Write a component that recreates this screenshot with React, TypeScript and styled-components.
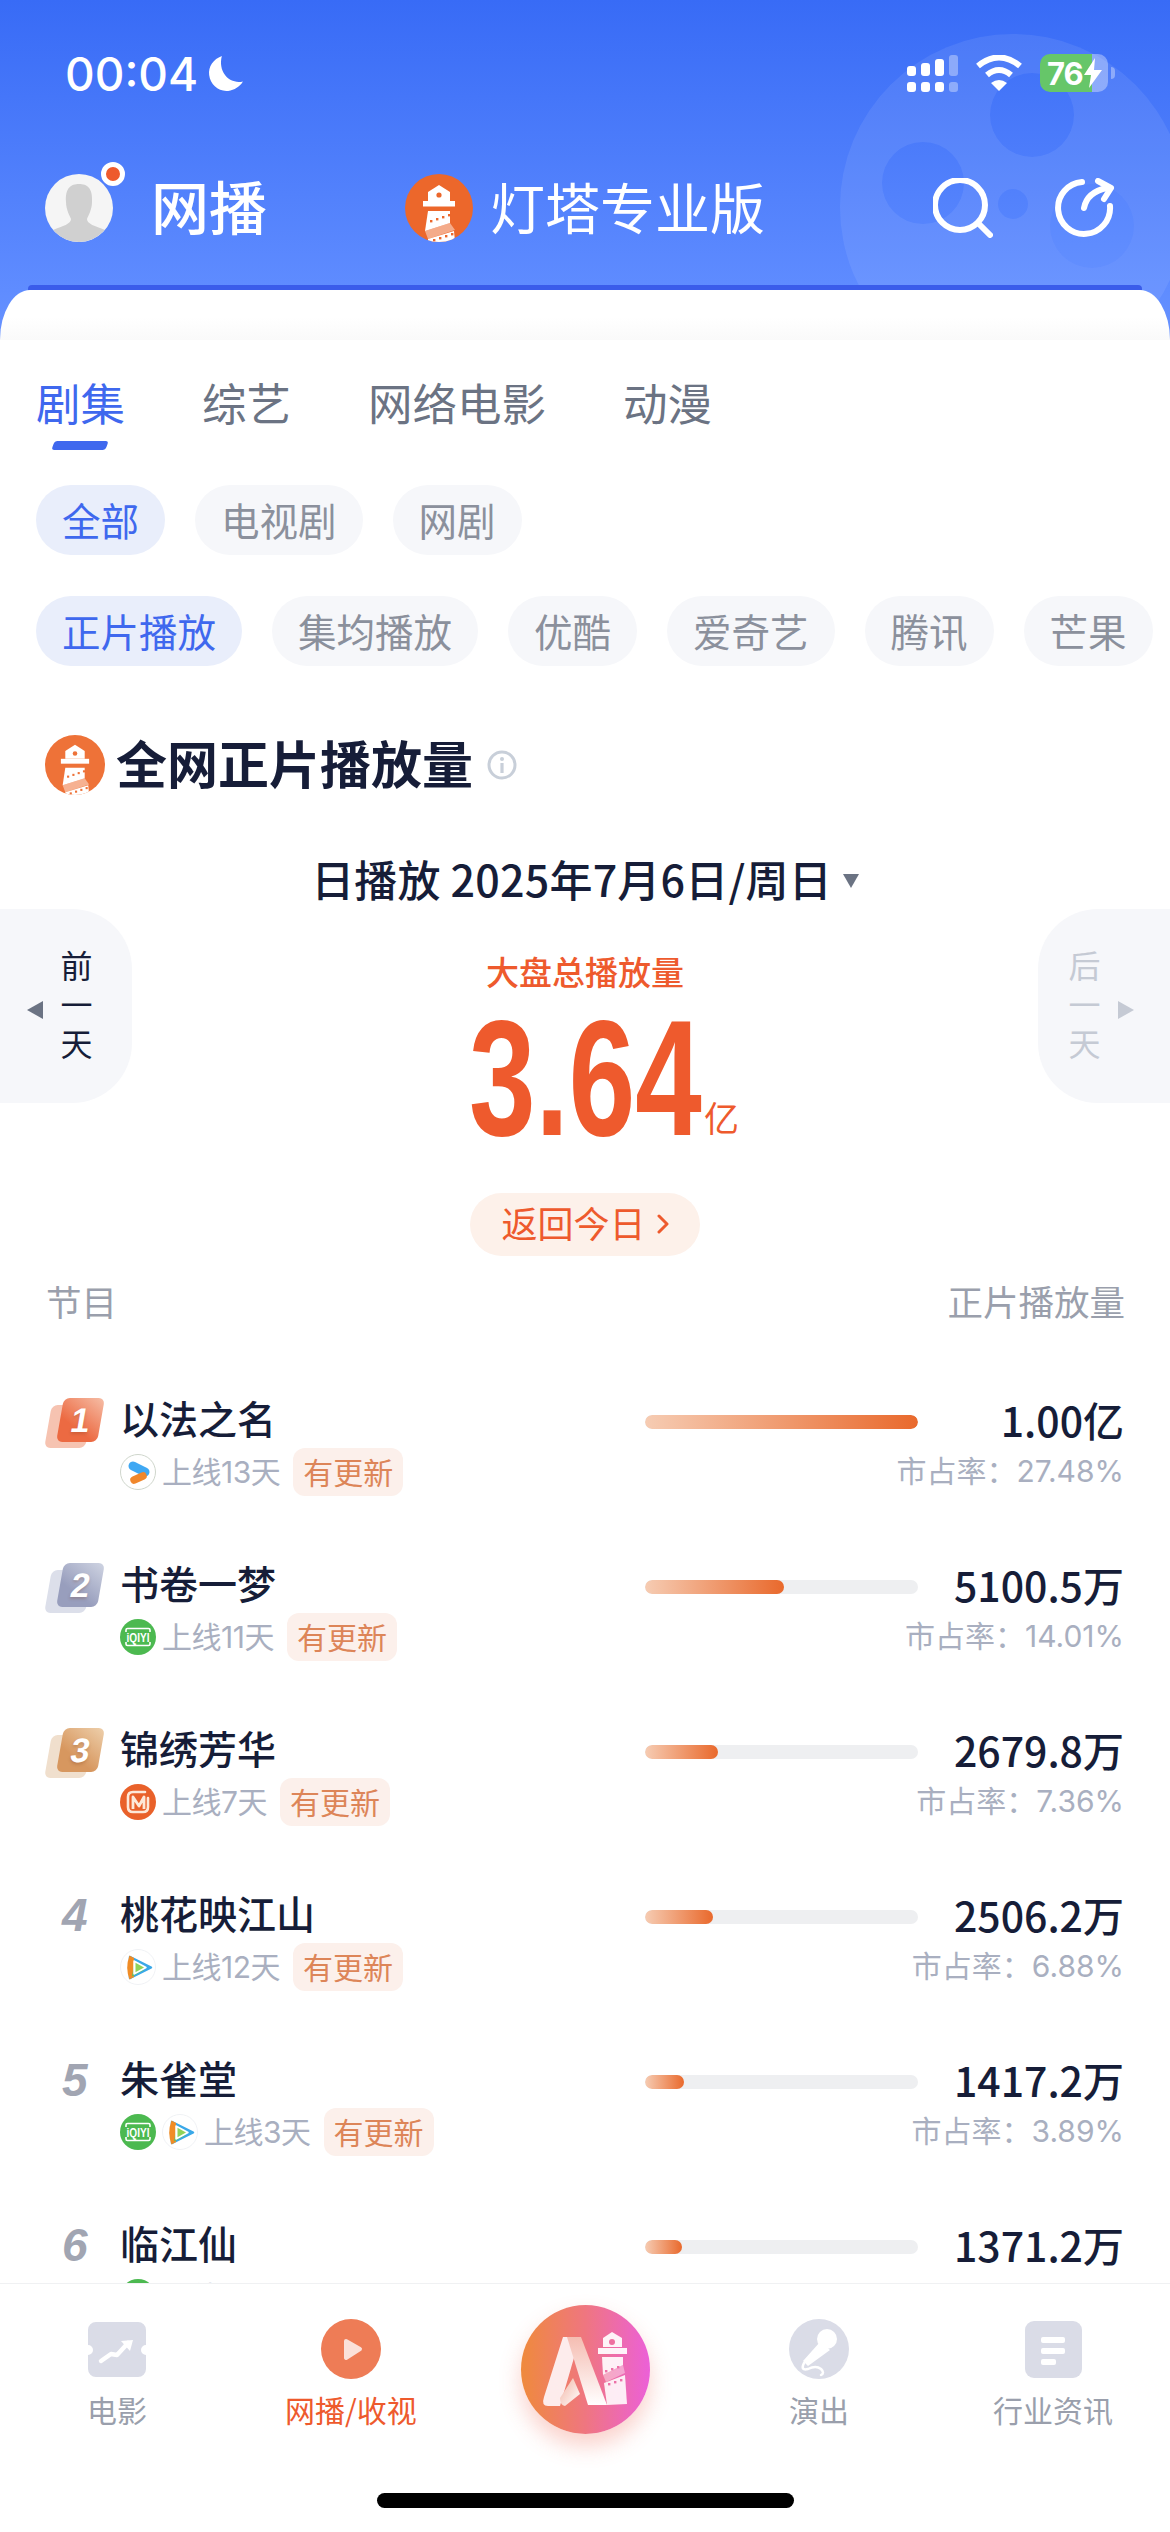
import styled, { createGlobalStyle } from "styled-components";

interface RowData {
  rank: number;
  name: string;
  platforms: string[];
  days: string;
  updated: boolean;
  bar: number;
  value: string;
  share: string;
}

const rows: RowData[] = [
  { rank: 1, name: "以法之名", platforms: ["youku"], days: "上线13天", updated: true, bar: 273, value: "1.00亿", share: "市占率：27.48%" },
  { rank: 2, name: "书卷一梦", platforms: ["iqiyi"], days: "上线11天", updated: true, bar: 139, value: "5100.5万", share: "市占率：14.01%" },
  { rank: 3, name: "锦绣芳华", platforms: ["mango"], days: "上线7天", updated: true, bar: 73, value: "2679.8万", share: "市占率：7.36%" },
  { rank: 4, name: "桃花映江山", platforms: ["tencent"], days: "上线12天", updated: true, bar: 68, value: "2506.2万", share: "市占率：6.88%" },
  { rank: 5, name: "朱雀堂", platforms: ["iqiyi", "tencent"], days: "上线3天", updated: true, bar: 39, value: "1417.2万", share: "市占率：3.89%" },
  { rank: 6, name: "临江仙", platforms: ["iqiyi"], days: "上线", updated: false, bar: 37, value: "1371.2万", share: "" },
];

const tabs = ["剧集", "综艺", "网络电影", "动漫"];
const kinds = ["全部", "电视剧", "网剧"];
const metrics = ["正片播放", "集均播放", "优酷", "爱奇艺", "腾讯", "芒果"];

const badgeColors: Record<number, { front: string; back: string }> = {
  1: { front: "linear-gradient(35deg, #ec6a42 35%, #f6bfa8)", back: "#f6c3b1" },
  2: { front: "linear-gradient(35deg, #989ebd 35%, #d0d5e3)", back: "#dcdfea" },
  3: { front: "linear-gradient(35deg, #d7975f 35%, #eed0ac)", back: "#f0dfcd" },
};

const LighthouseLogo = ({ size, color }: { size: number; color: string }) => (
  <LogoDisc $size={size} $color={color}>
    <svg viewBox="0 0 68 68" width={size} height={size}>
      <path d="M34 11 L45 18 V27 H23 V18 Z" fill="#fff" />
      <circle cx="34" cy="21" r="2.6" fill={color} />
      <rect x="18" y="27" width="32" height="5.5" fill="#fff" />
      <path d="M23 37 H45 V49 L20 57 Z" fill="#fff" />
      <path d="M20 57 L45 49 L50 56 L23 65 Z" fill="#fff" opacity="0.45" />
      <path d="M23 65 L49 57 L50 68 H23 Z" fill="#fff" />
      <g fill={color}>
        <rect x="25" y="46" width="2.4" height="2.4" />
        <rect x="31" y="44" width="2.4" height="2.4" />
        <rect x="37" y="42" width="2.4" height="2.4" />
        <rect x="43" y="40" width="2.4" height="2.4" />
        <rect x="28" y="65" width="2.4" height="2.4" />
        <rect x="34" y="63" width="2.4" height="2.4" />
        <rect x="40" y="61" width="2.4" height="2.4" />
        <rect x="46" y="59" width="2.4" height="2.4" />
      </g>
    </svg>
  </LogoDisc>
);

const PlatformIcon = ({ kind }: { kind: string }) => {
  if (kind === "iqiyi") {
    return (
      <svg viewBox="0 0 36 36" width="36" height="36">
        <circle cx="18" cy="18" r="18" fill="#4cb950" />
        <path d="M6 13 V11 Q6 9.5 7.5 9.5 H28.5 Q30 9.5 30 11 V13 M30 23 V25 Q30 26.5 28.5 26.5 H7.5 Q6 26.5 6 25 V23" fill="none" stroke="#fff" strokeWidth="1.6" />
        <text x="18" y="22.6" textAnchor="middle" fontFamily="Liberation Sans" fontWeight="700" fontSize="12" textLength="23" lengthAdjust="spacingAndGlyphs" fill="#fff">
          iQIYI
        </text>
      </svg>
    );
  }
  if (kind === "mango") {
    return (
      <svg viewBox="0 0 36 36" width="36" height="36">
        <circle cx="18" cy="18" r="18" fill="#e9612a" />
        <path d="M25 8 H13 Q8 8 8 13 V23 Q8 28 13 28 H23 Q28 28 28 23 V14" fill="none" stroke="#fde8d8" strokeWidth="2.6" strokeLinecap="round" />
        <path d="M13 25 V13 L19 22 L24 13 V25" fill="none" stroke="#fde8d8" strokeWidth="2.8" strokeLinejoin="round" />
      </svg>
    );
  }
  if (kind === "tencent") {
    return (
      <svg viewBox="0 0 36 36" width="36" height="36">
        <circle cx="18" cy="18" r="17.5" fill="#fff" stroke="#f0f2f5" />
        <path d="M10 8 L31 18.5 L10 29 Z" fill="#3aa8e8" stroke="#3aa8e8" strokeWidth="2.5" strokeLinejoin="round" />
        <path d="M9.5 6.5 Q5 18.5 9.5 30.5 L14 28 V9 Z" fill="#f08c26" />
        <path d="M12 27.5 L24 21 L14 16 Z" fill="#5cc25e" />
        <path d="M14 12 L26 18.5 L14 25 Z" fill="#fff" stroke="#fff" strokeWidth="1.5" strokeLinejoin="round" />
        <path d="M15.5 13.8 L24 18.5 L15.5 23.2 Z" fill="#8fd35a" />
      </svg>
    );
  }
  return (
    <svg viewBox="0 0 36 36" width="36" height="36">
      <circle cx="18" cy="18" r="17.5" fill="#fff" stroke="#cfd6cc" />
      <path d="M13 12 L25 18" stroke="#3fa8f3" strokeWidth="9" strokeLinecap="round" />
      <path d="M14 26 L23 22" stroke="#f0872c" strokeWidth="7.5" strokeLinecap="round" />
    </svg>
  );
};

const Rank = ({ rank }: { rank: number }) => {
  const colors = badgeColors[rank];
  if (!colors) return <PlainRank>{rank}</PlainRank>;
  return (
    <BadgeStack>
      <BadgeBack style={{ background: colors.back }} />
      <BadgeFront style={{ background: colors.front }}>{rank}</BadgeFront>
    </BadgeStack>
  );
};

const DayLabel = ({ text, muted }: { text: string; muted?: boolean }) => (
  <DayText>
    {text.split("").map((c, i) => (
      <DayChar key={i} $muted={muted}>{c}</DayChar>
    ))}
  </DayText>
);

const App = () => {
  return (
    <Page>
      <GlobalStyle />
      <Header>
        <Reel viewBox="0 0 1170 340" width="1170" height="340">
          <defs>
            <mask id="reel-holes">
              <rect width="1170" height="340" fill="#fff" />
              <circle cx="1032" cy="115" r="42" fill="#000" />
              <circle cx="923" cy="183" r="41" fill="#000" />
              <circle cx="1013" cy="204" r="15" fill="#000" />
              <circle cx="1092" cy="226" r="42" fill="#000" opacity="0.5" />
            </mask>
          </defs>
          <circle cx="1013" cy="207" r="173" fill="#fff" opacity="0.075" mask="url(#reel-holes)" />
        </Reel>
        <StatusBar>
          <Clock>
            00:04
            <svg viewBox="0 0 36 36" width="38" height="38">
              <path d="M15 1 C7 4 2 11 3 19 C4 28 12 35 21 34 C27 33 32 30 35 25 C23 28 11 17 15 1 Z" fill="#fff" />
            </svg>
          </Clock>
          <StatusIcons>
            <svg viewBox="0 0 51 37" width="51" height="37">
              <g fill="#fff">
                <rect x="0" y="11" width="9" height="10" rx="3" />
                <rect x="14" y="8" width="9" height="13" rx="3" />
                <rect x="28" y="4" width="9" height="17" rx="3" />
                <rect x="0" y="27" width="9" height="10" rx="3" />
                <rect x="14" y="27" width="9" height="10" rx="3" />
                <rect x="28" y="27" width="9" height="10" rx="3" />
              </g>
              <g fill="#fff" opacity="0.35">
                <rect x="42" y="0" width="9" height="21" rx="3" />
                <rect x="42" y="27" width="9" height="10" rx="3" />
              </g>
            </svg>
            <svg viewBox="0 0 48 36" width="48" height="36">
              <path d="M3 11 Q24 -6 45 11" fill="none" stroke="#fff" strokeWidth="6" />
              <path d="M12 20 Q24 10 36 20" fill="none" stroke="#fff" strokeWidth="6" />
              <path d="M16 28 Q24 22 32 28 L24 36 Z" fill="#fff" />
            </svg>
            <Battery>
              76
              <svg viewBox="0 0 18 30" width="18" height="30">
                <path d="M11 0 L0 17 H7 L5 30 L18 12 H10 Z" fill="#fff" />
              </svg>
            </Battery>
          </StatusIcons>
        </StatusBar>
        <NavRow>
          <NavLeft>
            <Avatar>
              <svg viewBox="0 0 68 68" width="68" height="68">
                <path d="M21 28 C20 14 26 10 34 10 C42 10 48 14 47 28 C47 36 43 42 42 45 C42 50 50 52 60 56 C52 64 44 68 34 68 C24 68 14 64 8 56 C18 52 26 50 26 45 C25 42 21 36 21 28 Z" fill="#d0d0d0" />
              </svg>
              <AvatarDot />
            </Avatar>
            <NavTitle>网播</NavTitle>
          </NavLeft>
          <NavBrand>
            <LighthouseLogo size={68} color="#ec672b" />
            <BrandName>灯塔专业版</BrandName>
          </NavBrand>
          <NavActions>
            <svg viewBox="0 0 60 60" width="60" height="60">
              <circle cx="27" cy="27" r="25" fill="none" stroke="#fff" strokeWidth="6" />
              <path d="M45 45 L57 57" stroke="#fff" strokeWidth="6" strokeLinecap="round" />
            </svg>
            <svg viewBox="0 0 60 60" width="60" height="60">
              <path d="M27 4 A26 26 0 1 0 55 28" fill="none" stroke="#fff" strokeWidth="6" strokeLinecap="round" />
              <path d="M29 30 Q32 14 52 10" fill="none" stroke="#fff" strokeWidth="6" strokeLinecap="round" />
              <path d="M43 3 L56 10 L49 21" fill="none" stroke="#fff" strokeWidth="6" strokeLinecap="round" strokeLinejoin="round" />
            </svg>
          </NavActions>
        </NavRow>
      </Header>

      <Card>
        <TabBar>
          {tabs.map((t, i) => (
            <Tab key={t} $active={i === 0}>{t}</Tab>
          ))}
        </TabBar>
        <ChipRow $top={53}>
          {kinds.map((t, i) => (
            <Chip key={t} $active={i === 0}>{t}</Chip>
          ))}
        </ChipRow>
        <ChipRow $top={41}>
          {metrics.map((t, i) => (
            <Chip key={t} $active={i === 0}>{t}</Chip>
          ))}
        </ChipRow>

        <SectionTitle>
          <LighthouseLogo size={60} color="#ee7238" />
          <SectionName>全网正片播放量</SectionName>
          <svg viewBox="0 0 30 30" width="30" height="30">
            <circle cx="15" cy="15" r="13" fill="none" stroke="#c8cfd9" strokeWidth="3" />
            <circle cx="15" cy="9" r="2" fill="#c8cfd9" />
            <rect x="13.4" y="13" width="3.2" height="10" fill="#c8cfd9" />
          </svg>
        </SectionTitle>

        <DateLine>
          日播放 2025年7月6日/周日
          <DateCaret />
        </DateLine>

        <Hero>
          <DayButton $side="left">
            <Arrow $side="left" />
            <DayLabel text="前一天" />
          </DayButton>
          <HeroCenter>
            <HeroLabel>大盘总播放量</HeroLabel>
            <BigRow>
              <BigNumberBox>
                <BigNumber>3.64</BigNumber>
              </BigNumberBox>
              <BigUnit>亿</BigUnit>
            </BigRow>
            <TodayPill>
              返回今日
              <svg viewBox="0 0 12 20" width="12" height="20">
                <path d="M2 2 L10 10 L2 18" fill="none" stroke="#ee5a2d" strokeWidth="3" strokeLinecap="round" strokeLinejoin="round" />
              </svg>
            </TodayPill>
          </HeroCenter>
          <DayButton $side="right">
            <DayLabel text="后一天" muted />
            <Arrow $side="right" />
          </DayButton>
        </Hero>

        <ListHead>
          <span>节目</span>
          <span>正片播放量</span>
        </ListHead>

        <List>
          {rows.map((r) => (
            <Row key={r.rank}>
              <RankCell><Rank rank={r.rank} /></RankCell>
              <Name>{r.name}</Name>
              <BarTrack>
                <BarFill style={{ width: r.bar }} />
              </BarTrack>
              <Value>{r.value}</Value>
              <Meta>
                {r.platforms.map((p) => (
                  <PlatformIcon key={p} kind={p} />
                ))}
                <Days>{r.days}</Days>
                {r.updated && <UpdateTag>有更新</UpdateTag>}
              </Meta>
              <Share>{r.share}</Share>
            </Row>
          ))}
        </List>
      </Card>

      <BottomBar>
        <BottomItem>
          <BottomIcon>
            <svg viewBox="0 0 58 55" width="58" height="55">
              <path d="M8 0 H50 A8 8 0 0 1 58 8 V23 A5 5 0 0 0 58 33 V47 A8 8 0 0 1 50 55 H8 A8 8 0 0 1 0 47 V33 A5 5 0 0 0 0 23 V8 A8 8 0 0 1 8 0 Z" fill="#dadce7" />
              <path d="M13 39 L23 32 L29 33 L40 21" fill="none" stroke="#fff" strokeWidth="4.5" strokeLinecap="round" strokeLinejoin="round" />
              <path d="M33 19 L45 18 L42 29 Z" fill="#fff" />
            </svg>
          </BottomIcon>
          <BottomLabel>电影</BottomLabel>
        </BottomItem>
        <BottomItem>
          <BottomIcon>
            <svg viewBox="0 0 60 60" width="60" height="60">
              <circle cx="30" cy="30" r="30" fill="#ee7c56" />
              <path d="M25 22 L39 30 L25 39 Z" fill="#fbe1d9" stroke="#fbe1d9" strokeWidth="4" strokeLinejoin="round" />
            </svg>
          </BottomIcon>
          <BottomLabel $active>网播/收视</BottomLabel>
        </BottomItem>
        <BottomItem $center>
          <AiButton>
            <svg viewBox="0 0 129 129" width="129" height="129">
              <defs>
                <linearGradient id="ai-fold" x1="0" y1="0" x2="1" y2="1">
                  <stop offset="0" stopColor="#f2b4a4" />
                  <stop offset="1" stopColor="#fff" />
                </linearGradient>
                <linearGradient id="ai-leg" x1="0" y1="0" x2="0" y2="1">
                  <stop offset="0" stopColor="#f5bdb2" />
                  <stop offset="1" stopColor="#fff" />
                </linearGradient>
              </defs>
              <path d="M42 32 H59 L39 101 H27 Q20 101 23 92 Z" fill="#fdecec" />
              <path d="M46 32 H60 L86 100 H67 Z" fill="url(#ai-leg)" />
              <path d="M52 73 L39 93 Q39 100 44 101 L59 89 Z" fill="url(#ai-fold)" />
              <path d="M91 27 L101 33 V42 H82 V33 Z" fill="#fff" opacity="0.92" />
              <circle cx="91" cy="37" r="3" fill="#ee70a0" />
              <rect x="77" y="43" width="29" height="6" fill="#fff" opacity="0.92" />
              <path d="M81 52 H102 V60 L82 70 Z" fill="#fff" opacity="0.9" />
              <path d="M82 70 L102 60 L104 68 L85 77 Z" fill="#fff" opacity="0.4" />
              <path d="M83 78 L104 70 L106 99 L86 100 Z" fill="#fff" opacity="0.88" />
              <g fill="#ec70a8">
                <rect x="84" y="65" width="2.4" height="2.4" />
                <rect x="90" y="63" width="2.4" height="2.4" />
                <rect x="96" y="61" width="2.4" height="2.4" />
                <rect x="87" y="78" width="2.4" height="2.4" />
                <rect x="93" y="76" width="2.4" height="2.4" />
                <rect x="99" y="74" width="2.4" height="2.4" />
              </g>
            </svg>
          </AiButton>
        </BottomItem>
        <BottomItem>
          <BottomIcon>
            <svg viewBox="0 0 60 60" width="60" height="60">
              <circle cx="30" cy="30" r="30" fill="#dadce7" />
              <circle cx="38" cy="20" r="10" fill="#fff" />
              <path d="M31 23 L41 31 L19 47 L14 42 Z" fill="#fff" />
              <path d="M15 44 Q11 52 19 50 Q27 46 32 50 Q36 54 32 56" fill="none" stroke="#fff" strokeWidth="2.5" strokeLinecap="round" />
            </svg>
          </BottomIcon>
          <BottomLabel>演出</BottomLabel>
        </BottomItem>
        <BottomItem>
          <BottomIcon>
            <svg viewBox="0 0 57 57" width="57" height="57">
              <rect width="57" height="57" rx="9" fill="#dadce7" />
              <rect x="16" y="16" width="24" height="6" rx="2" fill="#fff" />
              <rect x="16" y="27" width="24" height="6" rx="2" fill="#fff" />
              <rect x="16" y="38" width="15" height="6" rx="2" fill="#fff" />
            </svg>
          </BottomIcon>
          <BottomLabel>行业资讯</BottomLabel>
        </BottomItem>
        <HomeIndicator />
      </BottomBar>
    </Page>
  );
};

export default App;

const GlobalStyle = createGlobalStyle`
  html, body {
    margin: 0;
    padding: 0;
    background: #fff;
    font-family: "Noto Sans CJK SC", "Noto Sans", sans-serif;
  }
  * { box-sizing: border-box; }
`;

const Page = styled.div`
  position: relative;
  width: 1170px;
  height: 2532px;
  overflow: hidden;
  background: #fff;
`;

const Header = styled.header`
  position: relative;
  height: 340px;
  overflow: hidden;
  background: linear-gradient(180deg, #386bf6 0, #5f8cff 290px, #6893ff 340px);
  color: #fff;
`;

const Reel = styled.svg`
  position: absolute;
  top: 0;
  left: 0;
`;

const StatusBar = styled.div`
  position: relative;
  height: 150px;
  padding: 50px 62px 0 65px;
  display: flex;
  justify-content: space-between;
  align-items: flex-start;
`;

const Clock = styled.div`
  display: flex;
  align-items: center;
  gap: 8px;
  height: 48px;
  font-family: Inter, sans-serif;
  font-size: 46px;
  font-weight: 500;
`;

const StatusIcons = styled.div`
  display: flex;
  align-items: center;
  gap: 17px;
  margin-top: 4px;
`;

const Battery = styled.div`
  position: relative;
  width: 68px;
  height: 38px;
  padding-left: 7px;
  display: flex;
  align-items: center;
  border-radius: 10px;
  font-family: Inter, sans-serif;
  font-size: 31px;
  font-weight: 700;
  letter-spacing: -1px;
  background: linear-gradient(90deg, #66c669 76%, rgba(255, 255, 255, 0.35) 76%);

  svg { margin-left: 1px; }

  &::after {
    content: "";
    position: absolute;
    right: -7px;
    top: 13px;
    width: 4px;
    height: 12px;
    border-radius: 0 4px 4px 0;
    background: rgba(255, 255, 255, 0.35);
  }
`;

const NavRow = styled.div`
  position: relative;
  height: 116px;
  padding: 0 55px 0 45px;
  display: grid;
  grid-template-columns: 360px 1fr auto;
  align-items: center;
`;

const NavLeft = styled.div`
  display: flex;
  align-items: center;
  gap: 38px;
`;

const Avatar = styled.div`
  position: relative;
  width: 68px;
  height: 68px;
  border-radius: 50%;
  background: #f5f5f5;

  svg { border-radius: 50%; display: block; }
`;

const AvatarDot = styled.span`
  position: absolute;
  top: -12px;
  right: -12px;
  width: 24px;
  height: 24px;
  border-radius: 50%;
  background: #ee5a2d;
  border: 5px solid #fff;
`;

const NavTitle = styled.div`
  padding-bottom: 6px;
  font-size: 58px;
  font-weight: 500;
  line-height: 70px;
`;

const NavBrand = styled.div`
  display: flex;
  align-items: center;
  gap: 17px;
`;

const BrandName = styled.div`
  padding-bottom: 6px;
  font-size: 55px;
  font-weight: 400;
  line-height: 70px;
`;

const NavActions = styled.div`
  display: flex;
  align-items: center;
  gap: 62px;

  svg { display: block; }
`;

const LogoDisc = styled.div<{ $size: number; $color: string }>`
  width: ${(p) => p.$size}px;
  height: ${(p) => p.$size}px;
  flex: none;
  border-radius: 50%;
  overflow: hidden;
  background: ${(p) => p.$color};

  svg { display: block; }
`;

const Card = styled.main`
  position: relative;
  margin-top: -50px;
  padding-top: 82px;
  border-radius: 30px 30px 0 0 / 50px 50px 0 0;
  background: linear-gradient(180deg, #fff 27px, #fafafa 50px, #fff 50px);

  &::before {
    content: "";
    position: absolute;
    top: -5px;
    left: 28px;
    right: 28px;
    height: 5px;
    border-radius: 4px 4px 0 0;
    background: #3a5cea;
  }
`;

const TabBar = styled.nav`
  display: flex;
  gap: 77px;
  padding-left: 36px;
`;

const Tab = styled.div<{ $active?: boolean }>`
  position: relative;
  font-size: 44.5px;
  line-height: 60px;
  color: ${(p) => (p.$active ? "#3f68ee" : "#6b7383")};

  &::after {
    content: "";
    display: ${(p) => (p.$active ? "block" : "none")};
    position: absolute;
    left: 17px;
    bottom: -18px;
    width: 54px;
    height: 9px;
    border-radius: 3px;
    background: #3f68ee;
    transform: skewX(-20deg);
  }
`;

const ChipRow = styled.div<{ $top: number }>`
  display: flex;
  gap: 30px;
  margin-top: ${(p) => p.$top}px;
  padding-left: 36px;
  white-space: nowrap;
`;

const Chip = styled.div<{ $active?: boolean }>`
  height: 70px;
  padding: 0 26px 3px;
  display: flex;
  align-items: center;
  border-radius: 35px;
  font-size: 38.5px;
  color: ${(p) => (p.$active ? "#3f68ee" : "#8b909c")};
  background: ${(p) => (p.$active ? "#e9eefb" : "#f6f7fa")};
`;

const SectionTitle = styled.div`
  display: flex;
  align-items: center;
  height: 60px;
  margin-top: 69px;
  padding-left: 45px;

  svg { flex: none; }
`;

const SectionName = styled.h2`
  margin: 0 14px 0 11px;
  padding-bottom: 6px;
  font-size: 51px;
  font-weight: 700;
  line-height: 60px;
  color: #161d38;
`;

const DateLine = styled.div`
  display: flex;
  justify-content: center;
  align-items: center;
  gap: 11px;
  height: 50px;
  margin-top: 61px;
  padding-bottom: 6px;
  font-size: 43px;
  font-weight: 500;
  letter-spacing: 0.2px;
  color: #161d38;
`;

const DateCaret = styled.span`
  width: 0;
  height: 0;
  margin-top: 6px;
  border-left: 8px solid transparent;
  border-right: 8px solid transparent;
  border-top: 14px solid #6b7383;
`;

const Hero = styled.section`
  display: grid;
  grid-template-columns: 132px 1fr 132px;
  align-items: start;
  margin-top: 3px;
`;

const DayButton = styled.div<{ $side: "left" | "right" }>`
  height: 194px;
  display: flex;
  align-items: center;
  justify-content: center;
  gap: ${(p) => (p.$side === "left" ? "18px" : "17px")};
  padding: ${(p) => (p.$side === "left" ? "0 40px 0 27px" : "0 38px 0 32px")};
  background: #f6f7fa;
  border-radius: ${(p) => (p.$side === "left" ? "0 60px 60px 0" : "60px 0 0 60px")};
`;

const Arrow = styled.span<{ $side: "left" | "right" }>`
  flex: none;
  width: 0;
  height: 0;
  margin-top: 8px;
  border-top: 9px solid transparent;
  border-bottom: 9px solid transparent;
  ${(p) =>
    p.$side === "left"
      ? "border-right: 16px solid #6b7383;"
      : "border-left: 16px solid #c5cad4;"}
`;

const DayText = styled.div`
  margin-top: -6px;
`;

const DayChar = styled.div<{ $muted?: boolean }>`
  height: 39px;
  font-size: 32px;
  line-height: 39px;
  text-align: center;
  color: ${(p) => (p.$muted ? "#c5cad4" : "#161d38")};
`;

const HeroCenter = styled.div`
  display: flex;
  flex-direction: column;
  align-items: center;
`;

const HeroLabel = styled.div`
  margin-top: 42px;
  font-size: 33px;
  line-height: 40px;
  font-weight: 500;
  color: #ee5a2d;
`;

const BigRow = styled.div`
  display: flex;
  align-items: flex-end;
  margin-top: 28px;
  padding-left: 38px;
`;

const BigNumberBox = styled.div`
  width: 230px;
  height: 118px;
`;

const BigNumber = styled.div`
  font-family: "Liberation Sans", Arial, sans-serif;
  font-size: 165px;
  font-weight: 700;
  line-height: 118px;
  color: #ee5a2d;
  white-space: nowrap;
  transform: scaleX(0.725);
  transform-origin: left center;
`;

const BigUnit = styled.div`
  margin-left: 5px;
  font-size: 35px;
  line-height: 40px;
  color: #ee5a2d;
`;

const TodayPill = styled.div`
  display: flex;
  align-items: center;
  justify-content: center;
  gap: 11px;
  width: 230px;
  height: 63px;
  margin-top: 56px;
  padding-bottom: 5px;
  border-radius: 32px;
  font-size: 36px;
  color: #ee5a2d;
  background: #fdf1ea;

  svg { margin-top: 4px; }
`;

const ListHead = styled.div`
  display: flex;
  justify-content: space-between;
  height: 46px;
  margin-top: 24px;
  padding: 0 45px 0 46px;
  font-size: 35.5px;
  line-height: 42px;
  color: #9a9fac;
`;

const List = styled.div`
  margin-top: 69px;
`;

const Row = styled.div`
  display: grid;
  grid-template-columns: 74px 525px 273px 1fr;
  grid-template-rows: 50px 48px;
  height: 165px;
  row-gap: 3px;
  padding: 0 46px;
`;

const RankCell = styled.div`
  grid-row: 1 / 3;
`;

const BadgeStack = styled.div`
  position: relative;
  width: 60px;
  height: 54px;
`;

const BadgeBack = styled.div`
  position: absolute;
  left: 2px;
  top: 10px;
  width: 41px;
  height: 43px;
  border-radius: 6px;
  transform: skewX(-10deg);
`;

const BadgeFront = styled.div`
  position: absolute;
  left: 14px;
  top: 3px;
  width: 41px;
  height: 44px;
  border-radius: 6px;
  display: flex;
  align-items: center;
  justify-content: center;
  font-family: "Liberation Sans", Arial, sans-serif;
  font-size: 34px;
  font-weight: 700;
  color: #fff;
  text-shadow: 0 2px 3px rgba(120, 60, 30, 0.25);
  transform: skewX(-10deg);
`;

const PlainRank = styled.div`
  padding-left: 16px;
  font-family: "Liberation Sans", Arial, sans-serif;
  font-size: 46px;
  font-style: italic;
  font-weight: 700;
  line-height: 50px;
  color: #a1a5b2;
`;

const Name = styled.div`
  font-size: 39px;
  font-weight: 500;
  line-height: 44px;
  color: #161d38;
`;

const BarTrack = styled.div`
  align-self: center;
  height: 14px;
  margin-top: 4px;
  border-radius: 7px;
  overflow: hidden;
  background: #eeeff1;
`;

const BarFill = styled.div`
  height: 100%;
  border-radius: 7px;
  background: linear-gradient(90deg, #f6ccb3, #e9692c);
`;

const Value = styled.div`
  font-size: 41px;
  font-weight: 500;
  line-height: 48px;
  text-align: right;
  white-space: nowrap;
  color: #161d38;
`;

const Meta = styled.div`
  grid-column: 2;
  display: flex;
  align-items: center;
  gap: 6px;

  svg { flex: none; }
`;

const Days = styled.span`
  padding-bottom: 5px;
  font-family: Inter, "Noto Sans CJK SC", sans-serif;
  font-size: 30px;
  color: #a9afc0;
  letter-spacing: -0.5px;
`;

const UpdateTag = styled.span`
  height: 48px;
  padding: 0 10px 3px;
  margin-left: 7px;
  display: flex;
  align-items: center;
  border-radius: 12px;
  font-size: 30px;
  color: #dd8558;
  background: #fcf0eb;
`;

const Share = styled.div`
  grid-column: 3 / 5;
  align-self: center;
  padding-bottom: 6px;
  font-family: Inter, "Noto Sans CJK SC", sans-serif;
  font-size: 30px;
  text-align: right;
  color: #a9afc0;
`;

const BottomBar = styled.footer`
  position: absolute;
  left: 0;
  right: 0;
  bottom: 0;
  height: 249px;
  display: grid;
  grid-template-columns: repeat(5, 234px);
  background: #fff;
  border-top: 1px solid #f0f1f3;
`;

const BottomItem = styled.div<{ $center?: boolean }>`
  display: flex;
  flex-direction: column;
  align-items: center;
  padding-top: ${(p) => (p.$center ? "21px" : "35px")};
`;

const BottomIcon = styled.div`
  height: 60px;
  display: flex;
  align-items: center;
  justify-content: center;
`;

const BottomLabel = styled.div<{ $active?: boolean }>`
  margin-top: 12px;
  font-size: 30px;
  line-height: 36px;
  color: ${(p) => (p.$active ? "#ee5a2d" : "#9a9fac")};
`;

const AiButton = styled.div`
  width: 129px;
  height: 129px;
  border-radius: 50%;
  background: linear-gradient(90deg, #ef8a3c 0%, #ef7680 50%, #ec60d8 100%);
  box-shadow: 0 12px 22px rgba(238, 90, 70, 0.28);

  svg { display: block; }
`;

const HomeIndicator = styled.div`
  position: absolute;
  left: 377px;
  bottom: 24px;
  width: 417px;
  height: 15px;
  border-radius: 8px;
  background: #000;
`;
